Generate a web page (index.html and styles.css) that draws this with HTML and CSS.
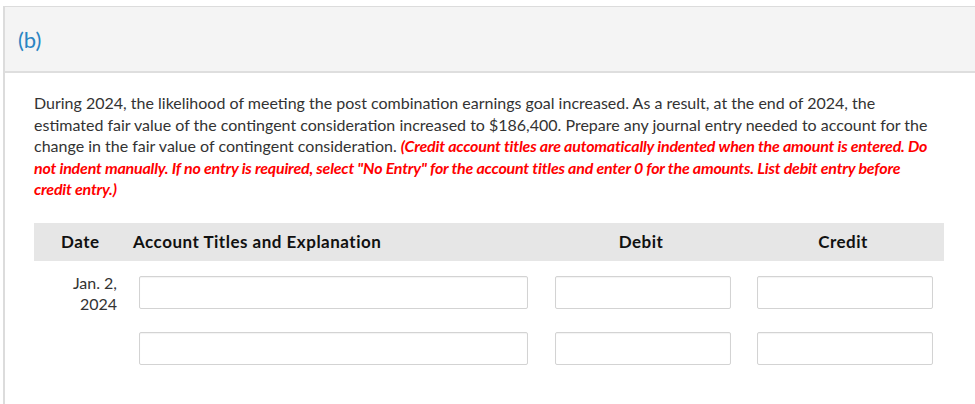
FILE: index.html
```html
<!DOCTYPE html>
<html>
<head>
<meta charset="utf-8">
<link rel="stylesheet" href="styles.css">
</head>
<body>
<div class="panel">
  <div class="panel-head"><span class="part">(b)</span></div>
  <div class="panel-body">
    <p class="question">During 2024, the likelihood of meeting the post combination earnings goal increased. As a result, at the end of 2024, the estimated fair value of the contingent consideration increased to $186,400. Prepare any journal entry needed to account for the change in the fair value of contingent consideration. <em class="note">(Credit account titles are automatically indented when the amount is entered. Do not indent manually. If no entry is required, select "No Entry" for the account titles and enter 0 for the amounts. List debit entry before credit entry.)</em></p>
    <div class="journal">
      <div class="jhead">
        <div class="c-date">Date</div>
        <div class="c-acct">Account Titles and Explanation</div>
        <div class="c-debit">Debit</div>
        <div class="c-credit">Credit</div>
      </div>
      <div class="jrow">
        <div class="c-date date-text">Jan. 2,<br>2024</div>
        <div class="c-acct"><input class="field acct-field" type="text"></div>
        <div class="c-debit"><input class="field amt-field" type="text"></div>
        <div class="c-credit"><input class="field amt-field" type="text"></div>
      </div>
      <div class="jrow">
        <div class="c-date date-text"></div>
        <div class="c-acct"><input class="field acct-field" type="text"></div>
        <div class="c-debit"><input class="field amt-field" type="text"></div>
        <div class="c-credit"><input class="field amt-field" type="text"></div>
      </div>
    </div>
  </div>
</div>
</body>
</html>
```

FILE: styles.css
```css
* { box-sizing: border-box; }
body {
  margin: 0;
  background: #fff;
  font-family: Lato, "Liberation Sans", sans-serif;
  color: #333;
}
.panel {
  margin: 6px 0 0 3px;
  border: 1px solid #dcdcdc;
  border-left-width: 2px;
  border-right: 0;
  border-bottom: 0;
  height: 398px;
}
.panel-head {
  height: 66px;
  background: #f4f4f4;
  border-bottom: 2px solid #dedede;
  padding: 0 0 0 13px;
  display: flex;
  align-items: center;
}
.part {
  font-size: 22px;
  color: #2a84c3;
  margin-top: 0;
}
.panel-body {
  padding: 19px 0 0 29px;
}
.question {
  margin: 0;
  width: 905px;
  font-size: 16px;
  line-height: 21.5px;
  color: #333;
}
.note {
  color: #f00;
  font-weight: bold;
  font-style: italic;
  letter-spacing: -0.2px;
}
.journal {
  margin-top: 23px;
  width: 910px;
}
.jhead {
  display: flex;
  align-items: center;
  height: 38px;
  background: #e6e6e6;
  font-weight: bold;
  font-size: 17px;
  letter-spacing: 0.5px;
  color: #111;
}
.c-date { width: 99px; flex: none; }
.c-acct { width: 416px; flex: none; }
.c-debit { width: 202px; flex: none; }
.c-credit { width: 202px; flex: none; }
.jhead .c-date { padding-left: 27px; }
.jhead .c-debit, .jhead .c-credit { text-align: center; padding-right: 18px; }
.jrow {
  display: flex;
  margin-top: 15px;
}
.jrow + .jrow { margin-top: 18px; }
.date-text {
  text-align: right;
  padding-right: 16px;
  font-size: 16px;
  line-height: 21px;
  margin-top: -4px;
}
.c-acct .field { margin-left: 6px; }
.field {
  display: block;
  height: 33px;
  border: 1px solid #d3d3d3;
  border-radius: 2px;
  background: #fff;
  outline: none;
  box-shadow: inset 0 1px 1px rgba(0,0,0,0.05);
}
.acct-field { width: 389px; }
.amt-field { width: 176px; margin-left: 6px; }
```
